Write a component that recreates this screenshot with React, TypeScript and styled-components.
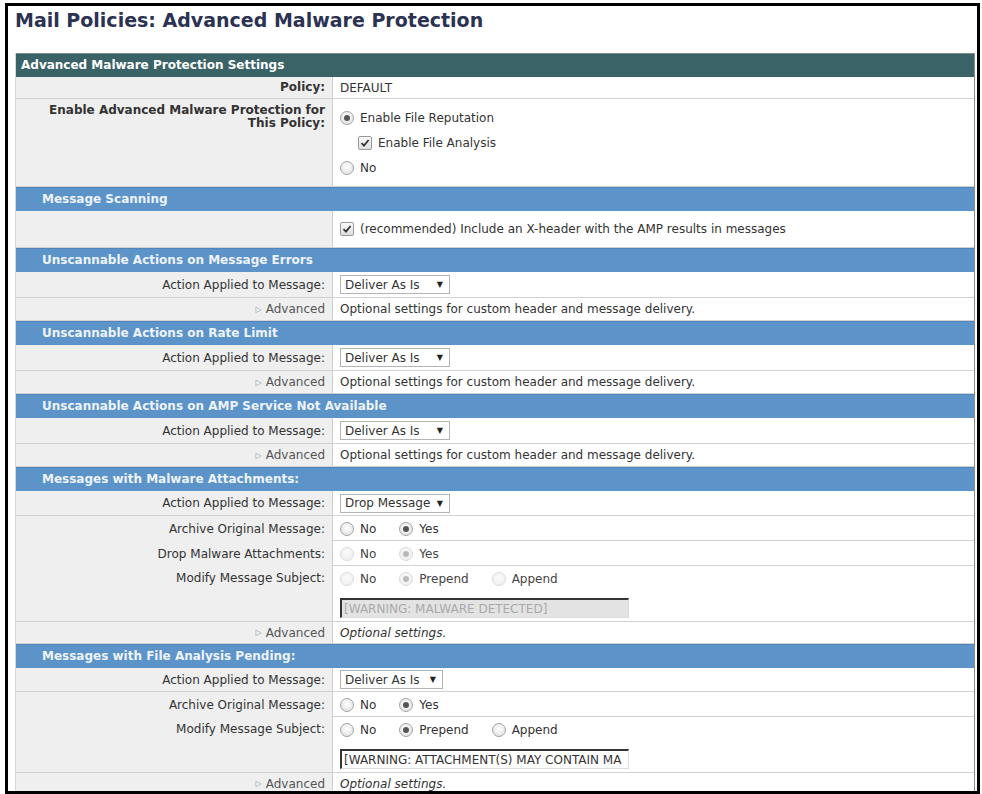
import React from "react";
import styled, { createGlobalStyle, css } from "styled-components";

const GlobalStyle = createGlobalStyle`
  html, body {
    margin: 0;
    padding: 0;
    background: #fff;
  }
  body {
    font-family: "DejaVu Sans", Verdana, sans-serif;
    font-size: 12px;
    color: #333;
  }
`;

const Frame = styled.div`
  box-sizing: border-box;
  margin: 3px 0 0 5px;
  width: 975px;
  height: 791px;
  border: 3px solid #000;
  overflow: hidden;
  background: #fff;
  padding-left: 7px;
`;

const Title = styled.h1`
  margin: 3px 0 22px 0;
  height: 22px;
  line-height: 22px;
  font-size: 19px;
  font-weight: 700;
  color: #2b3252;
`;

const Panel = styled.div`
  width: 958px;
  border-right: 1px solid #8a8a8a;
  border-left: 1px solid #d6d6d6;
`;

const TopHeader = styled.div`
  box-sizing: border-box;
  height: 24px;
  line-height: 22px;
  padding-left: 5px;
  background: #3a6367;
  border-top: 1px solid #7a8c8e;
  color: #fff;
  font-weight: 700;
  font-size: 12px;
`;

const SectionHeader = styled.div`
  box-sizing: border-box;
  height: 24px;
  line-height: 23px;
  padding-left: 26px;
  background: #5c93c9;
  color: #eef3f9;
  font-weight: 700;
  font-size: 12px;
  border-top: 1px solid #4f85bb;
`;

const Row = styled.div<{ $h: number }>`
  display: grid;
  grid-template-columns: 317px 1fr;
  height: ${(p) => p.$h}px;
  border-bottom: 1px solid #d2d2d2;
  box-sizing: border-box;
`;

const Label = styled.div<{ $top?: boolean; $bold?: boolean }>`
  background: #efefef;
  border-right: 1px solid #cfcfcf;
  display: flex;
  justify-content: flex-end;
  text-align: right;
  padding: 0 7px;
  color: #333;
  white-space: nowrap;
  ${(p) =>
    p.$top
      ? css`
          align-items: flex-start;
          padding-top: 5px;
        `
      : css`
          align-items: center;
        `}
  ${(p) =>
    p.$bold &&
    css`
      font-weight: 700;
      line-height: 13px;
    `}
`;

const Value = styled.div<{ $top?: boolean; $pad?: number }>`
  display: flex;
  flex-direction: column;
  padding-left: 7px;
  ${(p) =>
    p.$top
      ? css`
          justify-content: flex-start;
          padding-top: ${p.$pad ?? 5}px;
        `
      : css`
          justify-content: center;
        `}
`;

const OptionLine = styled.div<{ $indent?: number }>`
  display: flex;
  align-items: center;
  height: 25px;
  padding-left: ${(p) => p.$indent ?? 0}px;
`;

const Choice = styled.label<{ $dim?: boolean }>`
  display: inline-flex;
  align-items: center;
  gap: 6px;
  margin-right: 23px;
  color: ${(p) => (p.$dim ? "#444" : "#333")};
`;

const RadioDot = styled.span<{ $on?: boolean; $disabled?: boolean }>`
  position: relative;
  display: inline-block;
  width: 12px;
  height: 12px;
  border-radius: 50%;
  border: 1px solid ${(p) => (p.$disabled ? "#dadada" : "#a4a4a4")};
  background: ${(p) =>
    p.$disabled
      ? "radial-gradient(circle at 50% 40%, #fbfbfb, #ececec)"
      : "radial-gradient(circle at 50% 40%, #ffffff, #dcdcdc)"};
  ${(p) =>
    p.$on &&
    css`
      &::after {
        content: "";
        position: absolute;
        left: 3px;
        top: 3px;
        width: 6px;
        height: 6px;
        border-radius: 50%;
        background: ${p.$disabled ? "#b9b9b9" : "#555"};
      }
    `}
`;

const CheckBox = styled.span`
  display: inline-flex;
  align-items: center;
  justify-content: center;
  width: 12px;
  height: 12px;
  border: 1px solid #9a9a9a;
  border-radius: 2px;
  background: linear-gradient(#fafafa, #dedede);
`;

const Select = styled.div<{ $w: number }>`
  box-sizing: border-box;
  display: flex;
  align-items: center;
  justify-content: space-between;
  width: ${(p) => p.$w}px;
  height: 19px;
  padding: 0 6px 0 4px;
  border: 1px solid #b4b4b4;
  background: #fff;
  color: #333;
`;

const Arrow = styled.span`
  font-size: 8px;
  color: #222;
`;

const TextField = styled.div<{ $disabled?: boolean }>`
  box-sizing: border-box;
  width: 289px;
  height: 20px;
  margin-top: 7px;
  line-height: 18px;
  padding-left: 2px;
  white-space: nowrap;
  overflow: hidden;
  border-top: 2px solid #333;
  border-left: 2px solid #333;
  border-right: 1px solid #ddd;
  border-bottom: 1px solid #ddd;
  background: ${(p) => (p.$disabled ? "#e3e3e3" : "#fff")};
  color: ${(p) => (p.$disabled ? "#a9a9a9" : "#333")};
  font-size: 12px;
`;

const AdvLink = styled.span`
  display: inline-flex;
  align-items: center;
  gap: 4px;
  color: #555;
`;

const Tri = styled.span`
  font-size: 8px;
  color: #999;
`;

const Note = styled.span<{ $italic?: boolean }>`
  font-style: ${(p) => (p.$italic ? "italic" : "normal")};
  color: #333;
`;

const Check = () => (
  <CheckBox>
    <svg width="10" height="10" viewBox="0 0 10 10">
      <path d="M1.5 5.2 L4 7.6 L8.6 2" fill="none" stroke="#333" strokeWidth="1.8" />
    </svg>
  </CheckBox>
);

type Opt = { text: string; on?: boolean; disabled?: boolean };

const Radios = ({ opts }: { opts: Opt[] }) => (
  <OptionLine>
    {opts.map((o) => (
      <Choice key={o.text} $dim={o.disabled}>
        <RadioDot $on={o.on} $disabled={o.disabled} />
        {o.text}
      </Choice>
    ))}
  </OptionLine>
);

const ActionRow = ({ value, w, h }: { value: string; w: number; h: number }) => (
  <Row $h={h}>
    <Label>Action Applied to Message:</Label>
    <Value>
      <Select $w={w}>
        <span>{value}</span>
        <Arrow>▼</Arrow>
      </Select>
    </Value>
  </Row>
);

const AdvancedRow = ({ note, italic, h }: { note: string; italic?: boolean; h: number }) => (
  <Row $h={h}>
    <Label>
      <AdvLink>
        <Tri>▷</Tri>Advanced
      </AdvLink>
    </Label>
    <Value>
      <Note $italic={italic}>{note}</Note>
    </Value>
  </Row>
);

const customNote = "Optional settings for custom header and message delivery.";

export default function App() {
  return (
    <>
      <GlobalStyle />
      <Frame>
        <Title>Mail Policies: Advanced Malware Protection</Title>
        <Panel>
          <TopHeader>Advanced Malware Protection Settings</TopHeader>
          <Row $h={22}>
            <Label $bold>Policy:</Label>
            <Value>DEFAULT</Value>
          </Row>
          <Row $h={88}>
            <Label $top $bold>
              Enable Advanced Malware Protection for
              <br />
              This Policy:
            </Label>
            <Value $top $pad={6}>
              <OptionLine>
                <Choice>
                  <RadioDot $on />
                  Enable File Reputation
                </Choice>
              </OptionLine>
              <OptionLine $indent={18}>
                <Choice>
                  <Check />
                  Enable File Analysis
                </Choice>
              </OptionLine>
              <Radios opts={[{ text: "No" }]} />
            </Value>
          </Row>

          <SectionHeader>Message Scanning</SectionHeader>
          <Row $h={37}>
            <Label />
            <Value>
              <OptionLine>
                <Choice>
                  <Check />
                  (recommended) Include an X-header with the AMP results in messages
                </Choice>
              </OptionLine>
            </Value>
          </Row>

          <SectionHeader>Unscannable Actions on Message Errors</SectionHeader>
          <ActionRow value="Deliver As Is" w={110} h={26} />
          <AdvancedRow note={customNote} h={23} />

          <SectionHeader>Unscannable Actions on Rate Limit</SectionHeader>
          <ActionRow value="Deliver As Is" w={110} h={26} />
          <AdvancedRow note={customNote} h={23} />

          <SectionHeader>Unscannable Actions on AMP Service Not Available</SectionHeader>
          <ActionRow value="Deliver As Is" w={110} h={26} />
          <AdvancedRow note={customNote} h={23} />

          <SectionHeader>Messages with Malware Attachments:</SectionHeader>
          <ActionRow value="Drop Message" w={110} h={25} />
          <Row $h={25}>
            <Label>Archive Original Message:</Label>
            <Value>
              <Radios opts={[{ text: "No" }, { text: "Yes", on: true }]} />
            </Value>
          </Row>
          <Row $h={25}>
            <Label>Drop Malware Attachments:</Label>
            <Value>
              <Radios
                opts={[
                  { text: "No", disabled: true },
                  { text: "Yes", on: true, disabled: true },
                ]}
              />
            </Value>
          </Row>
          <Row $h={56}>
            <Label $top>Modify Message Subject:</Label>
            <Value $top $pad={0}>
              <Radios
                opts={[
                  { text: "No", disabled: true },
                  { text: "Prepend", on: true, disabled: true },
                  { text: "Append", disabled: true },
                ]}
              />
              <TextField $disabled>[WARNING: MALWARE DETECTED]</TextField>
            </Value>
          </Row>
          <AdvancedRow note="Optional settings." italic h={22} />

          <SectionHeader>Messages with File Analysis Pending:</SectionHeader>
          <ActionRow value="Deliver As Is" w={103} h={24} />
          <Row $h={25}>
            <Label>Archive Original Message:</Label>
            <Value>
              <Radios opts={[{ text: "No" }, { text: "Yes", on: true }]} />
            </Value>
          </Row>
          <Row $h={56}>
            <Label $top>Modify Message Subject:</Label>
            <Value $top $pad={0}>
              <Radios
                opts={[
                  { text: "No" },
                  { text: "Prepend", on: true },
                  { text: "Append" },
                ]}
              />
              <TextField>[WARNING: ATTACHMENT(S) MAY CONTAIN MA</TextField>
            </Value>
          </Row>
          <AdvancedRow note="Optional settings." italic h={22} />
        </Panel>
      </Frame>
    </>
  );
}
